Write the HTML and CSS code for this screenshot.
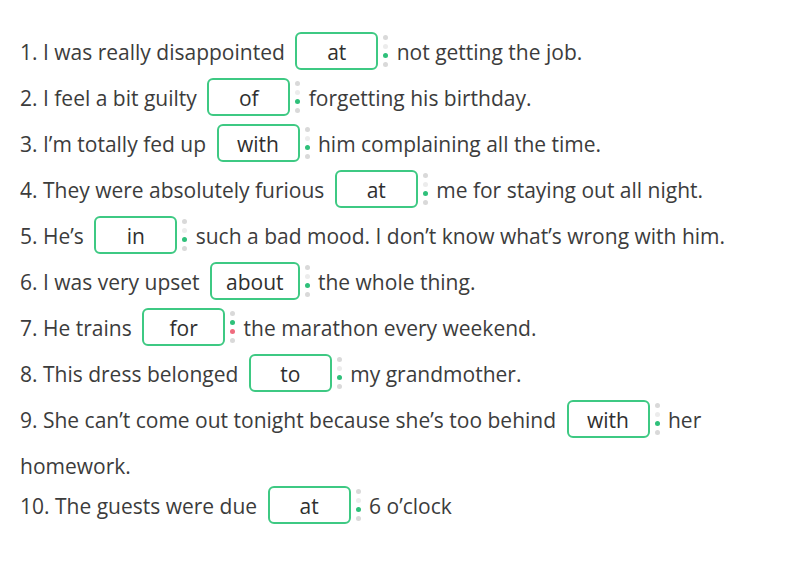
FILE: index.html
```html
<!DOCTYPE html>
<html lang="en">
<head>
<meta charset="utf-8">
<title>Prepositions exercise</title>
<link rel="stylesheet" href="styles.css">
</head>
<body>
<div class="exercise">
  <p class="item">1. I was really disappointed <span class="box">at</span><span class="dots"><i class="dot"></i><i class="dot faint"></i><i class="dot ok"></i><i class="dot"></i></span> not getting the job.</p>
  <p class="item">2. I feel a bit guilty <span class="box">of</span><span class="dots"><i class="dot"></i><i class="dot faint"></i><i class="dot ok"></i><i class="dot"></i></span> forgetting his birthday.</p>
  <p class="item">3. I’m totally fed up <span class="box">with</span><span class="dots"><i class="dot"></i><i class="dot faint"></i><i class="dot ok"></i><i class="dot"></i></span> him complaining all the time.</p>
  <p class="item">4. They were absolutely furious <span class="box">at</span><span class="dots"><i class="dot"></i><i class="dot faint"></i><i class="dot ok"></i><i class="dot"></i></span> me for staying out all night.</p>
  <p class="item">5. He’s <span class="box">in</span><span class="dots"><i class="dot"></i><i class="dot faint"></i><i class="dot ok"></i><i class="dot"></i></span> such a bad mood. I don’t know what’s wrong with him.</p>
  <p class="item">6. I was very upset <span class="box">about</span><span class="dots"><i class="dot"></i><i class="dot faint"></i><i class="dot ok"></i><i class="dot"></i></span> the whole thing.</p>
  <p class="item">7. He trains <span class="box">for</span><span class="dots"><i class="dot"></i><i class="dot ok"></i><i class="dot bad"></i><i class="dot"></i></span> the marathon every weekend.</p>
  <p class="item">8. This dress belonged <span class="box">to</span><span class="dots"><i class="dot"></i><i class="dot faint"></i><i class="dot ok"></i><i class="dot"></i></span> my grandmother.</p>
  <p class="item">9. She can’t come out tonight because she’s too behind <span class="box">with</span><span class="dots"><i class="dot"></i><i class="dot faint"></i><i class="dot ok"></i><i class="dot"></i></span> her homework.</p>
  <p class="item item-tight">10. The guests were due <span class="box">at</span><span class="dots"><i class="dot"></i><i class="dot faint"></i><i class="dot ok"></i><i class="dot"></i></span> 6 o’clock</p>
</div>
</body>
</html>
```
FILE: styles.css
```css
html, body {
  margin: 0;
  padding: 0;
  background: #ffffff;
}

.exercise {
  width: 730px;
  padding: 29px 0 0 20px;
  font-family: "Open Sans", "Noto Sans", sans-serif;
  font-size: 21px;
  color: #3c3c3c;
}

.item {
  margin: 0;
  line-height: 46px;
}

.item-tight {
  margin-top: -6px;
}

.box {
  display: inline-flex;
  align-items: center;
  justify-content: center;
  box-sizing: border-box;
  height: 38px;
  min-width: 83px;
  padding: 3px 14px 0;
  margin: 3px 4px 5px 5px;
  border: 2px solid #3ec983;
  border-radius: 6px;
  line-height: 1;
  vertical-align: top;
  color: #2f2f2f;
}

.dots {
  display: inline-flex;
  flex-direction: column;
  gap: 4px;
  vertical-align: top;
  margin: 6px 3px 8px 1px;
}

.dot {
  display: block;
  width: 5px;
  height: 5px;
  border-radius: 50%;
  background: #d9d9d9;
}

.dot.faint {
  background: #ececec;
}

.dot.ok {
  background: #2fc07a;
}

.dot.bad {
  background: #ef6b7e;
}
```
